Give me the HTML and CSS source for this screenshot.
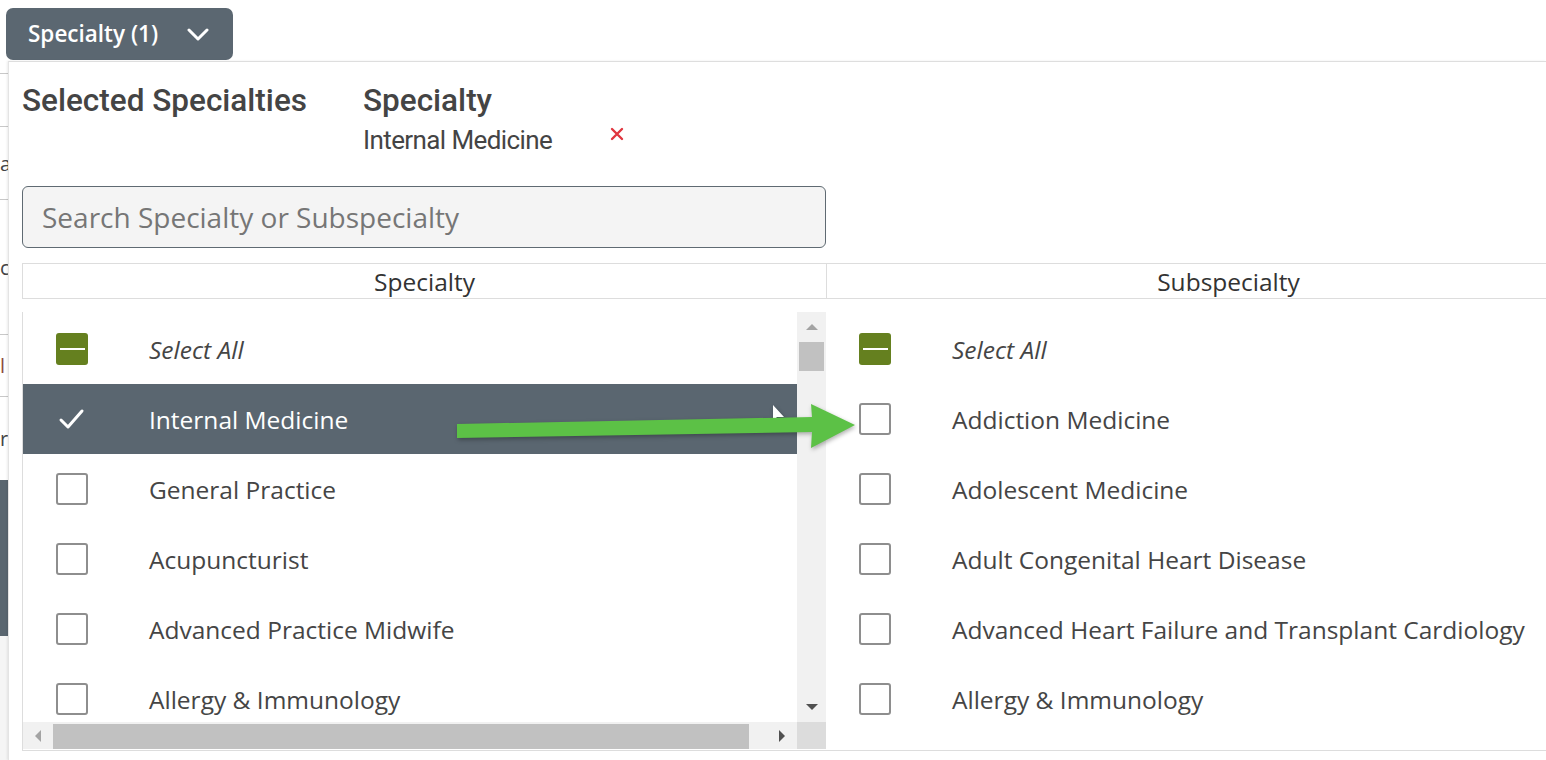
FILE: index.html
```html
<!DOCTYPE html>
<html lang="en">
  <head>
    <meta charset="UTF-8" />
    <meta name="viewport" content="width=device-width, initial-scale=1.0" />
    <title>Specialty Filter</title>
    <link rel="stylesheet" href="styles.css">
  </head>
  <body>
    <!-- filter toggle button -->
    <button class="filter-btn" type="button">
      <span>Specialty (1)</span>
      <svg class="chevron" width="22" height="14" viewBox="0 0 22 14">
        <path d="M2 2 L11 11 L20 2" fill="none" stroke="#fff" stroke-width="3" stroke-linecap="round" stroke-linejoin="round" />
      </svg>
    </button>

    <!-- page content that sits behind the open dropdown -->
    <div class="backdrop">
      <div class="bd-row bd-r1"></div>
      <div class="bd-row bd-r2"></div>
      <div class="bd-row bd-r3">a</div>
      <div class="bd-row bd-r4">c</div>
      <div class="bd-row bd-r5"><span class="bd-brown">l</span></div>
      <div class="bd-row bd-r6">r</div>
      <div class="bd-block"></div>
      <div class="bd-rest"></div>
    </div>

    <!-- dropdown panel -->
    <div class="panel">
      <div class="summary">
        <h2 class="summary-title">Selected Specialties</h2>
        <div class="summary-group">
          <h2 class="summary-title">Specialty</h2>
          <div class="chip">
            <span>Internal Medicine</span>
            <svg class="remove" width="14" height="14" viewBox="0 0 14 14">
              <path d="M2 2 L12 12 M12 2 L2 12" stroke="#e0363f" stroke-width="2.4" stroke-linecap="round" />
            </svg>
          </div>
        </div>
      </div>

      <input class="search" type="text" placeholder="Search Specialty or Subspecialty" />

      <div class="col-heads">
        <div class="col-head left">Specialty</div>
        <div class="col-head right">Subspecialty</div>
      </div>

      <div class="lists">
        <div class="list-left">
          <div class="viewport">
            <div class="row">
              <span class="box mixed"></span>
              <span class="label italic">Select All</span>
            </div>
            <div class="row active">
              <svg class="tick" width="32" height="32" viewBox="0 0 32 32">
                <path d="M5 17 L12 24 L26 8" fill="none" stroke="#fff" stroke-width="3" stroke-linecap="round" stroke-linejoin="round" />
              </svg>
              <span class="label">Internal Medicine</span>
            </div>
            <div class="row">
              <span class="box"></span>
              <span class="label">General Practice</span>
            </div>
            <div class="row">
              <span class="box"></span>
              <span class="label">Acupuncturist</span>
            </div>
            <div class="row">
              <span class="box"></span>
              <span class="label">Advanced Practice Midwife</span>
            </div>
            <div class="row">
              <span class="box"></span>
              <span class="label">Allergy &amp; Immunology</span>
            </div>
          </div>
          <div class="vscroll">
            <div class="sb-btn"><span class="tri up dim"></span></div>
            <div class="vthumb"></div>
            <div class="sb-fill"></div>
            <div class="sb-btn"><span class="tri down"></span></div>
          </div>
          <div class="hscroll">
            <div class="sb-btn"><span class="tri left dim"></span></div>
            <div class="hthumb"></div>
            <div class="sb-fill"></div>
            <div class="sb-btn"><span class="tri right"></span></div>
          </div>
          <div class="corner"></div>
        </div>

        <div class="list-right">
          <div class="row">
            <span class="box mixed"></span>
            <span class="label italic">Select All</span>
          </div>
          <div class="row">
            <span class="box"></span>
            <span class="label">Addiction Medicine</span>
          </div>
          <div class="row">
            <span class="box"></span>
            <span class="label">Adolescent Medicine</span>
          </div>
          <div class="row">
            <span class="box"></span>
            <span class="label">Adult Congenital Heart Disease</span>
          </div>
          <div class="row">
            <span class="box"></span>
            <span class="label">Advanced Heart Failure and Transplant Cardiology</span>
          </div>
          <div class="row">
            <span class="box"></span>
            <span class="label">Allergy &amp; Immunology</span>
          </div>
        </div>
      </div>
    </div>

    <!-- annotation: mouse pointer and green arrow drawn over the screenshot -->
    <svg class="annotation" width="410" height="60" viewBox="0 0 410 60">
      <path d="M323 10 L323 26 L327 22 L334 22 Z" fill="#fff" />
      <path d="M7 29 L362 22 L361 9 L405 30 L361 53 L362 37 L7 43 Z" fill="#5cc146" />
    </svg>
  </body>
</html>
```

FILE: styles.css
```css
/* base page */
body {
  margin: 0;
  font-family: "Open Sans", "Liberation Sans", sans-serif;
  color: #454545;
  background: #fff;
  position: relative;
  height: 760px;
  overflow: hidden;
}

/* toggle button above the dropdown */
.filter-btn {
  display: flex;
  align-items: center;
  gap: 29px;
  margin: 8px 0 0 6px;
  width: 227px;
  height: 52px;
  padding: 0 0 2px 22px;
  border: none;
  border-radius: 7px;
  background: #5b6771;
  color: #fff;
  font-family: "Open Sans", sans-serif;
  font-size: 22.5px;
  font-weight: 600;
}

.chevron {
  margin-top: 3px;
}

/* bits of the page under the dropdown (only the left edge shows) */
.backdrop {
  width: 120px;
  margin-top: 1px;
  font-size: 20px;
  color: #444;
}

.bd-row {
  border-bottom: 1px solid #c8c8c8;
  display: flex;
  align-items: center;
}

.bd-r1 { height: 12px; }
.bd-r2 { height: 52px; }
.bd-r3 { height: 72px; }
.bd-r4 { height: 134px; }
.bd-r5 { height: 61px; }
.bd-r6 { height: 83px; border-bottom: none; }

.bd-brown {
  color: #8b4b3b;
}

.bd-block {
  height: 156px;
  background: #5a6670;
}

.bd-rest {
  height: 130px;
  background: #f5f5f5;
}

/* dropdown panel */
.panel {
  position: absolute;
  top: 61px;
  left: 8px;
  right: 0;
  bottom: 0;
  overflow: hidden;
  background: #fff;
  border-top: 1px solid #dedede;
  border-left: 1px solid #e4e4e4;
  box-shadow: -1px 0 2px rgba(0, 0, 0, 0.08);
  padding-left: 13px;
}

.summary {
  display: flex;
  padding-top: 21px;
  height: 103px;
}

.summary-title {
  margin: 0;
  font-family: Roboto, sans-serif;
  font-weight: 500;
  font-size: 31.5px;
  line-height: 36px;
  color: #444;
}

.summary > .summary-title {
  width: 341px;
}

.chip {
  display: flex;
  align-items: center;
  gap: 58px;
  margin-top: 6px;
  font-family: Roboto, sans-serif;
  font-size: 26px;
  line-height: 30px;
  color: #444;
  letter-spacing: -0.6px;
}

.remove {
  margin-top: -13px;
}

/* search box */
.search {
  display: block;
  box-sizing: border-box;
  width: 804px;
  height: 62px;
  margin: 0;
  padding: 0 0 0 19px;
  border: 1px solid #5f6a72;
  border-radius: 6px;
  background: #f4f4f4;
  font-family: "Open Sans", sans-serif;
  font-size: 28px;
  color: #444;
  outline: none;
}

.search::placeholder {
  color: #767676;
}

/* column headers */
.col-heads {
  display: flex;
  margin-top: 15px;
  height: 34px;
  border-top: 1px solid #dddddd;
  border-bottom: 1px solid #dddddd;
  font-size: 24.5px;
  color: #333;
}

.col-head {
  display: flex;
  align-items: center;
  justify-content: center;
  flex: none;
}

.col-head.left {
  width: 803px;
  border-left: 1px solid #dddddd;
  border-right: 1px solid #dddddd;
}

.col-head.right {
  width: 803px;
}

/* the two lists */
.lists {
  display: flex;
  margin-top: 13px;
  height: 438px;
  border-bottom: 1px solid #dddddd;
}

.list-left {
  width: 803px;
  border-left: 1px solid #dddddd;
  display: grid;
  grid-template-columns: 774px 29px;
  grid-template-rows: 410px 27px;
}

.viewport {
  overflow: hidden;
  padding-top: 2px;
}

.list-right {
  flex: 1;
  padding-top: 2px;
  overflow: hidden;
}

.row {
  display: flex;
  align-items: center;
  height: 70px;
  padding-left: 33px;
  font-size: 24.5px;
  color: #454545;
  white-space: nowrap;
}

.row.active {
  background: #5a6670;
  color: #fff;
}

.label {
  margin-left: 61px;
}

.italic {
  font-style: italic;
}

/* checkboxes */
.box {
  box-sizing: border-box;
  flex: none;
  width: 32px;
  height: 32px;
  border: 2px solid #8e8e8e;
  border-radius: 3px;
  background: #fff;
}

.box.mixed {
  border: none;
  background: #65801f;
  display: flex;
  align-items: center;
  justify-content: center;
}

.box.mixed::after {
  content: "";
  width: 25px;
  height: 2px;
  background: #fff;
}

.tick {
  flex: none;
}

/* fake scrollbars */
.vscroll {
  display: flex;
  flex-direction: column;
  background: #f1f1f1;
}

.hscroll {
  display: flex;
  background: #f1f1f1;
}

.corner {
  background: #dcdcdc;
}

.sb-btn {
  flex: none;
  width: 29px;
  height: 30px;
  display: flex;
  align-items: center;
  justify-content: center;
}

.hscroll .sb-btn {
  width: 30px;
  height: 27px;
}

.sb-fill {
  flex: 1;
}

.vthumb {
  height: 29px;
  margin: 0 2px;
  background: #c1c1c1;
}

.hthumb {
  width: 696px;
  margin-top: 2px;
  background: #c1c1c1;
}

.tri {
  width: 0;
  height: 0;
}

.tri.up {
  border-left: 6px solid transparent;
  border-right: 6px solid transparent;
  border-bottom: 6px solid #505050;
}

.tri.down {
  border-left: 6px solid transparent;
  border-right: 6px solid transparent;
  border-top: 6px solid #505050;
}

.tri.left {
  border-top: 6px solid transparent;
  border-bottom: 6px solid transparent;
  border-right: 6px solid #505050;
}

.tri.right {
  border-top: 6px solid transparent;
  border-bottom: 6px solid transparent;
  border-left: 6px solid #505050;
}

.tri.up.dim {
  border-bottom-color: #a3a3a3;
}

.tri.left.dim {
  border-right-color: #a3a3a3;
}

/* green arrow annotation on top of everything */
.annotation {
  position: absolute;
  left: 450px;
  top: 395px;
  filter: drop-shadow(1px 2px 2px rgba(0, 0, 0, 0.3));
}
```
